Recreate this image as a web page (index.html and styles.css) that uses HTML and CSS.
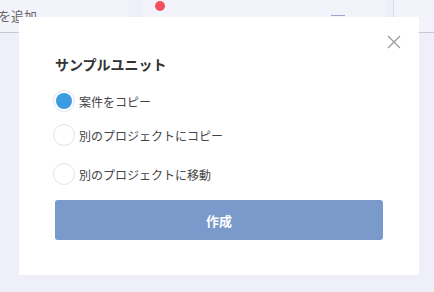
FILE: index.html
```html
<!DOCTYPE html>
<html lang="ja">
    <head>
        <meta charset="UTF-8" />
        <meta name="viewport" content="width=device-width, initial-scale=1.0" />
        <title>サンプルユニット</title>
        <link rel="stylesheet" href="styles.css">
    </head>
    <body>
        <div class="board">
            <div class="board-col col-left">
                <div class="col-card">
                    <span class="add-text">を追加</span>
                </div>
            </div>
            <div class="board-col col-mid">
                <div class="col-card">
                    <span class="badge"></span>
                    <span class="card-line"></span>
                </div>
            </div>
            <div class="board-col col-right">
                <div class="col-card"></div>
            </div>
        </div>

        <div class="modal">
            <button class="close-btn" aria-label="閉じる">
                <svg width="14" height="14" viewBox="0 0 14 14">
                    <path d="M1 1 L13 13 M13 1 L1 13" stroke="#9a9a9a" stroke-width="1.2" fill="none" />
                </svg>
            </button>
            <h3 class="modal-title">サンプルユニット</h3>
            <ul class="options">
                <li class="option">
                    <span class="radio checked"></span>
                    <span class="option-label">案件をコピー</span>
                </li>
                <li class="option">
                    <span class="radio"></span>
                    <span class="option-label">別のプロジェクトにコピー</span>
                </li>
                <li class="option option-last">
                    <span class="radio"></span>
                    <span class="option-label">別のプロジェクトに移動</span>
                </li>
            </ul>
            <button class="submit-btn">作成</button>
        </div>
    </body>
</html>
```

FILE: styles.css
```css
body {
    margin: 0;
    width: 434px;
    height: 292px;
    overflow: hidden;
    position: relative;
    background-color: #efeffa;
    font-family: "Noto Sans CJK JP", "Noto Sans", sans-serif;
}

/* 背景のボード */
.board {
    display: flex;
    height: 292px;
}

.board-col {
    box-sizing: border-box;
}

.col-left {
    width: 128px;
}

.col-mid {
    width: 242px;
    margin-left: 15px;
}

.col-right {
    flex: 1;
    margin-left: 8px;
}

.col-card {
    position: relative;
    height: 33px;
    background-color: #f3f3fc;
    border-bottom: 1px solid #c9c9d6;
    box-sizing: border-box;
}

.col-right .col-card {
    border-left: 1px solid #dadae6;
    border-radius: 0 0 0 4px;
}

.col-mid .col-card {
    border-bottom: none;
}

.add-text {
    position: absolute;
    left: -2px;
    top: 6px;
    font-size: 13px;
    color: #666;
}

.badge {
    position: absolute;
    left: 12px;
    top: 1px;
    width: 10px;
    height: 10px;
    border-radius: 50%;
    background-color: #f4505e;
}

.card-line {
    position: absolute;
    left: 188px;
    top: 15px;
    width: 14px;
    height: 1px;
    background-color: #9aa6cc;
}

/* モーダル */
.modal {
    position: absolute;
    left: 19px;
    top: 17px;
    width: 400px;
    height: 258px;
    box-sizing: border-box;
    padding: 37px 36px 0;
    background-color: #fff;
}

.close-btn {
    position: absolute;
    top: 18px;
    right: 18px;
    padding: 0;
    border: none;
    background: none;
    cursor: pointer;
}

.close-btn svg {
    display: block;
}

.modal-title {
    margin: 0 0 16px;
    font-size: 14px;
    font-weight: bold;
    line-height: 20px;
    color: #333;
}

.options {
    list-style: none;
    margin: 0;
    padding: 0;
}

.option {
    display: flex;
    align-items: center;
    gap: 4px;
    height: 22px;
    margin-bottom: 12px;
    margin-left: -2px;
}

.option + .option-last {
    margin-top: 17px;
    margin-bottom: 15px;
}

.radio {
    box-sizing: border-box;
    width: 22px;
    height: 22px;
    border: 1px solid #dfe4ee;
    border-radius: 50%;
    background-color: #fff;
    position: relative;
}

.radio.checked::after {
    content: "";
    position: absolute;
    left: 2px;
    top: 2px;
    width: 16px;
    height: 16px;
    border-radius: 50%;
    background-color: #3a9be0;
}

.option-label {
    font-size: 12px;
    color: #444;
}

.submit-btn {
    display: block;
    width: 328px;
    height: 40px;
    border: none;
    border-radius: 3px;
    background-color: #7a9acb;
    color: #fff;
    font-family: inherit;
    font-size: 13px;
    font-weight: bold;
    cursor: pointer;
}
```
